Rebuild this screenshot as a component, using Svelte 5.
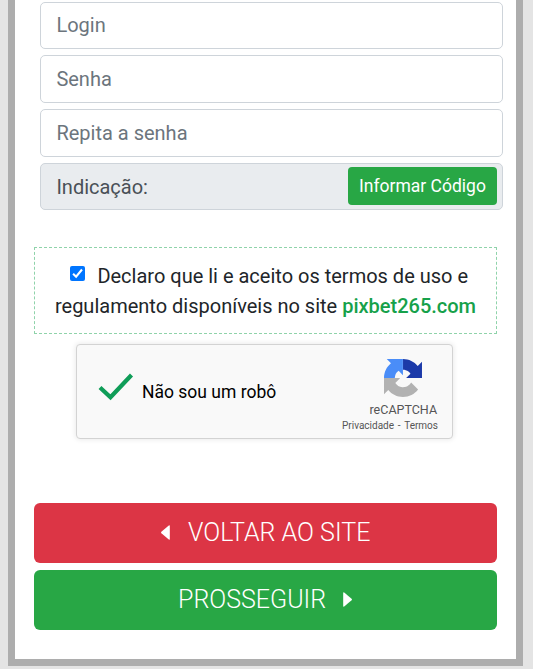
<script>
  let login = $state('');
  let password = $state('');
  let repeated = $state('');
  let accepted = $state(true);
</script>

<main class="frame">
  <form class="fields" onsubmit={(e) => e.preventDefault()}>
    <input class="short" type="text" placeholder="Login" bind:value={login} />
    <input type="password" placeholder="Senha" bind:value={password} />
    <input type="password" placeholder="Repita a senha" bind:value={repeated} />
    <div class="referral">
      <span>Indicação:</span>
      <button type="button">Informar Código</button>
    </div>
  </form>

  <label class="terms">
    <span class="line first">
      <input type="checkbox" bind:checked={accepted} />
      <svg class="box" class:off={!accepted} viewBox="0 0 15 15">
        <rect width="15" height="15" rx="2" fill="#0075ff" />
        <path d="M3.1 7.7 6.1 10.7 12 3.5" fill="none" stroke="#fff" stroke-width="2.1" />
      </svg>
      <span class="declare">Declaro que li e aceito os termos de uso e</span>
    </span>
    <span class="line">regulamento disponíveis no site <b>pixbet265.com</b></span>
  </label>

  <section class="captcha">
    <svg class="tick" width="36" height="28" viewBox="0 0 36 28">
      <path d="M2 14.5 12.5 24.3 33.5 2" fill="none" stroke="#0f9d58" stroke-width="4.2" />
    </svg>
    <span class="robot">Não sou um robô</span>
    <div class="brand">
      <svg class="logo" width="38" height="38" viewBox="0 0 64 64">
        <path fill="#1c3aa9" d="M64 31.955l-.033-1.37V4.687l-7.16 7.16C50.948 4.674 42.033.093 32.05.093v18.165c1 0 3.2.2 4.5.6 3.4.8 6.3 3 8.1 5.9l-7.4 7.2L64 31.955z" />
        <path fill="#4a8df8" d="M31.862.094l-1.37.033H4.594l7.16 7.16C4.58 13.147 0 22.06 0 32.046h18.2c.1-1.3.3-2.9.6-4 .9-3.4 3-6.2 5.9-8.1l7.2 7.4L31.862.094z" />
        <path fill="#b2b2b2" d="M.001 32.045l.033 1.37v25.898l7.16-7.16C13.054 59.327 21.968 63.907 31.953 63.907c10.39 0 19.622-4.96 25.456-12.638L45.674 39.409c-1.15 2.127-2.785 3.954-4.757 5.335-2.05 1.6-4.956 2.909-8.964 2.909-.484 0-.858-.057-1.133-.163-4.966-.392-9.27-3.132-11.804-7.11l8.307-8.307c-10.522.041-22.4.066-27.322-.028z" />
      </svg>
      <span class="name">reCAPTCHA</span>
      <span class="legal"><span>Privacidade</span><span class="dash">-</span><span>Termos</span></span>
    </div>
  </section>

  <div class="actions">
    <button class="back" type="button">
      <svg class="left" width="9" height="15" viewBox="0 0 9 15"><path d="M8.8.9v13.2q0 .9-1 .4L.4 8.3q-.7-.8 0-1.6L7.8.5q1-.5 1 .4z" fill="#fff" /></svg>
      <span>VOLTAR AO SITE</span>
    </button>
    <button class="next" type="button">
      <span>PROSSEGUIR</span>
      <svg class="right" width="9" height="15" viewBox="0 0 9 15"><path d="M.2.9v13.2q0 .9 1 .4l7.4-6.2q.7-.8 0-1.6L1.2.5Q.2 0 .2.9z" fill="#fff" /></svg>
    </button>
  </div>
</main>

<style>
  :global(body) {
    background: #e4e4e4;
    overflow: hidden;
  }
  * {
    box-sizing: border-box;
  }
  .frame {
    width: 515px;
    height: 666px;
    margin-left: 8px;
    border: 7px solid #adadad;
    border-top: 0;
    background: #fff;
    padding: 2px 19px 0;
    font-family: Roboto, 'Liberation Sans', sans-serif;
    font-size: 20px;
    line-height: 30px;
    color: #212529;
  }
  .fields {
    display: flex;
    flex-direction: column;
    gap: 6px;
    width: 463px;
    margin-left: 6px;
  }
  .fields input,
  .referral {
    height: 48px;
    border: 1px solid #ced4da;
    border-radius: 5px;
    padding: 0 15.4px;
    font: inherit;
    color: #495057;
    background: #fff;
    outline: none;
  }
  .fields .short {
    height: 47px;
    padding-bottom: 2px;
  }
  .fields input::placeholder {
    color: #6c757d;
    opacity: 1;
  }
  .fields .referral {
    height: 47px;
    display: flex;
    align-items: center;
    justify-content: space-between;
    background: #e9ecef;
    padding-right: 5px;
  }
  button {
    border: 0;
    color: #fff;
    font-family: inherit;
    padding: 0;
  }
  .referral button {
    width: 149px;
    height: 38px;
    border-radius: 4px;
    background: #28a745;
    font-size: 17.5px;
    line-height: 38px;
    margin-top: -1px;
  }
  .terms {
    display: block;
    width: 463px;
    height: 87px;
    margin-top: 37px;
    border: 1px dashed #8fd3aa;
    padding-top: 13px;
    text-align: center;
    white-space: nowrap;
  }
  .line {
    display: block;
  }
  .first {
    display: flex;
    padding-left: 35px;
  }
  .terms input {
    position: absolute;
    opacity: 0;
    margin: 0;
  }
  .box {
    width: 15px;
    height: 15px;
    margin: 5px 12.4px 0 0;
  }
  .off path {
    display: none;
  }
  b {
    font-weight: 500;
    color: #16a14a;
  }
  .captcha {
    display: flex;
    width: 377px;
    height: 95px;
    margin: 10px 0 0 42px;
    border: 1px solid #d3d3d3;
    border-radius: 4px;
    background: #f9f9f9;
    box-shadow: 0 0 5px 1px rgba(0, 0, 0, 0.08);
    color: #000;
  }
  .tick {
    margin: 28px 0 0 21px;
  }
  .robot {
    margin: 32px 0 0 8px;
    font-size: 17.5px;
    white-space: nowrap;
  }
  .brand {
    margin: 14px 14px 0 auto;
    width: 96px;
    display: flex;
    flex-direction: column;
    color: #555;
  }
  .logo {
    margin-left: 42px;
  }
  .name {
    margin-left: 27.5px;
    margin-top: 5px;
    font-size: 12.5px;
    line-height: 15px;
  }
  .legal {
    display: flex;
    justify-content: space-between;
    margin-top: 2px;
    font-size: 10px;
    line-height: 14px;
  }
  .actions {
    display: flex;
    flex-direction: column;
    gap: 7px;
    margin-top: 64px;
  }
  .actions button {
    display: flex;
    align-items: center;
    width: 463px;
    height: 60px;
    border-radius: 6px;
    padding-bottom: 2px;
    font-size: 25px;
    font-weight: 300;
    white-space: nowrap;
  }
  .actions .back {
    background: #dc3545;
    padding-left: 127px;
  }
  .actions .next {
    background: #28a745;
    padding-left: 144px;
  }
  .left {
    margin-right: 18px;
  }
  .right {
    margin-left: 17px;
  }
</style>
